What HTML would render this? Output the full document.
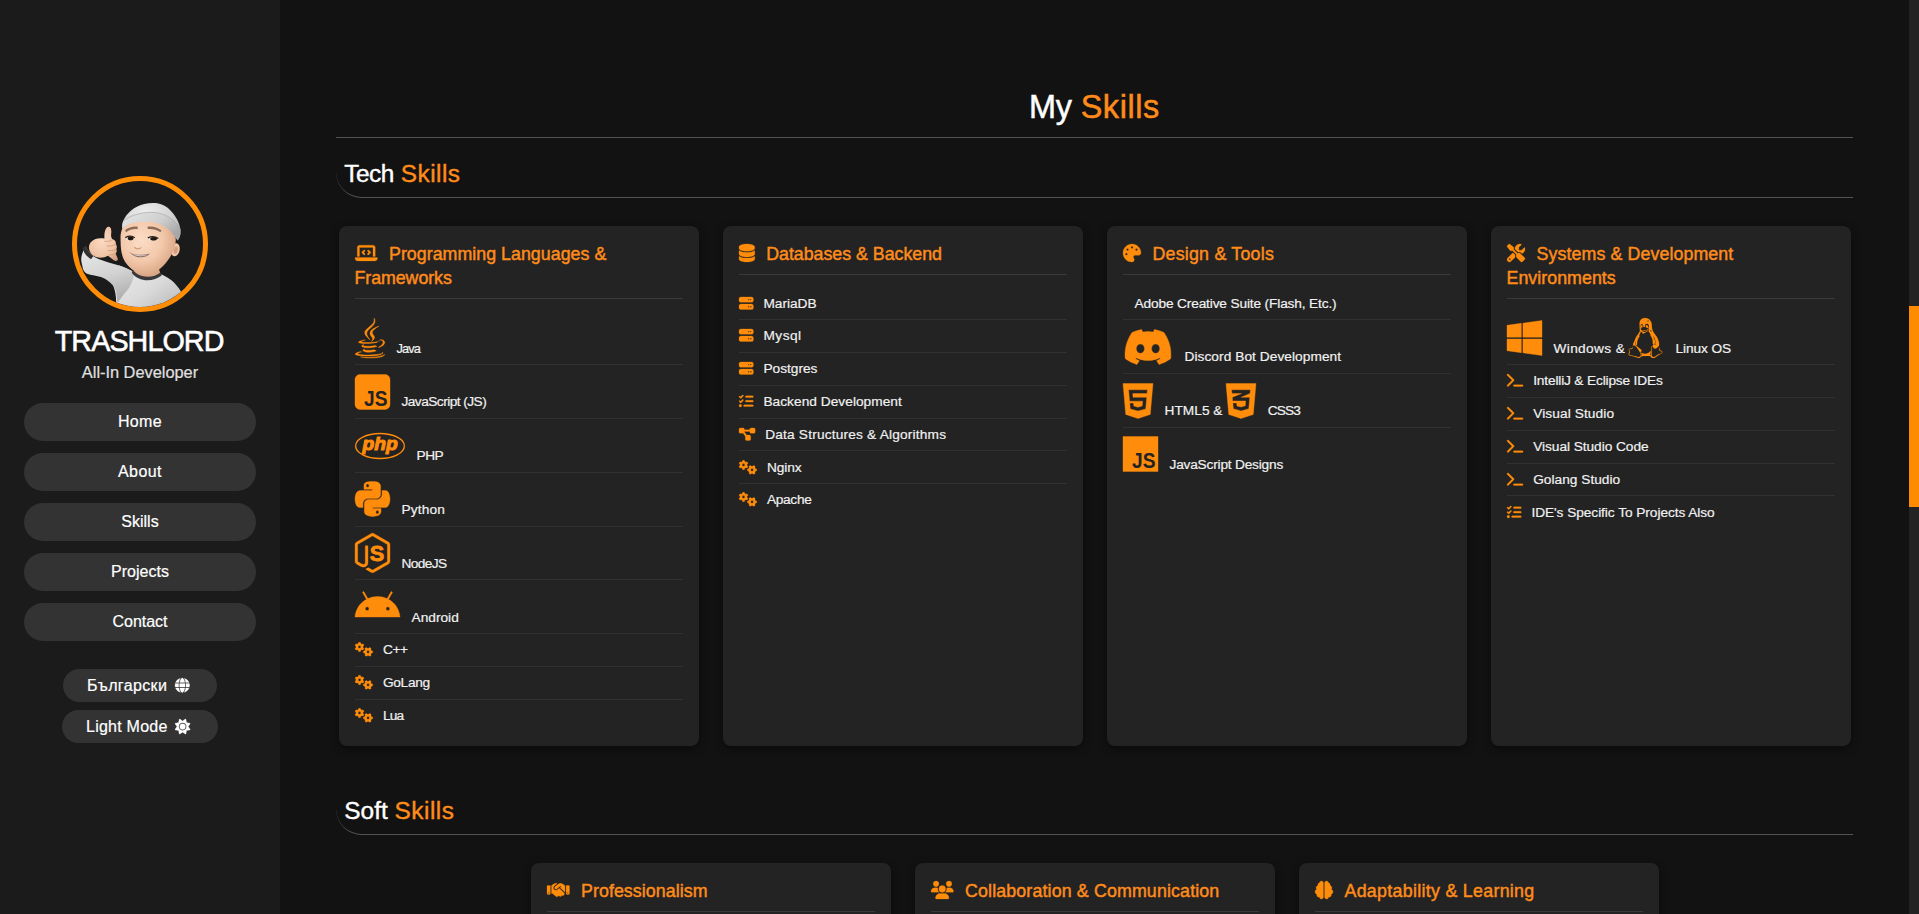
<!DOCTYPE html>
<html lang="en">
<head>
<meta charset="utf-8">
<title>TRASHLORD | All-In Developer - Skills</title>
<style>
*{box-sizing:border-box;margin:0;padding:0}
html,body{width:1919px;height:914px;overflow:hidden}
body{position:relative;background:#121212;color:#f1f1f1;font-family:"Liberation Sans",sans-serif;font-size:13.7px;line-height:16px}
.ic{display:block;flex:none;fill:currentColor;overflow:visible;stroke:currentColor;stroke-linejoin:round}
.ic.b{stroke-width:5px}
.ic.s{stroke-width:9px}
.ic.h{stroke-width:7px}
.ic.g{stroke-width:8px}
.t{white-space:nowrap}
.o{color:#ff8c1a}
/* sidebar */
.sidebar{position:absolute;left:0;top:0;width:280px;height:914px;background:#1b1b1b}
.avatar{position:absolute;left:72px;top:176px;width:136px;height:136px;border-radius:50%;border:5px solid #ff8d05;overflow:hidden}
.avatar svg{display:block;position:absolute;left:-5px;top:-5px;width:136px;height:136px}
.sidebar h1{position:absolute;left:-0.9px;width:280px;top:323.8px;text-align:center;font-size:28.7px;line-height:34px;font-weight:400;color:#fff;-webkit-text-stroke:.55px #fff}
.role{position:absolute;left:0;width:280px;top:361.5px;text-align:center;font-size:16.4px;line-height:20px;color:#e0e0e0;-webkit-text-stroke:.2px #e0e0e0}
.nb{position:absolute;left:24px;width:232px;height:38.2px;border-radius:19.1px;background:#333;color:#fff;text-align:center;font-size:16px;line-height:38.6px;-webkit-text-stroke:.2px #fff}
.tg{position:absolute;border:0;background:#333;color:#fff;font-family:inherit;font-size:16px;line-height:33px;height:33px;border-radius:16.5px;display:flex;align-items:center;justify-content:center;-webkit-text-stroke:.2px #fff}
.tg{padding-right:3.6px}
.tg .ic{margin-left:7.6px}
.tg.lang{left:63px;top:669px;width:154px}
.tg.mode{left:62px;top:710px;width:156px}
/* main */
main{position:absolute;left:280px;top:0;width:1629px;height:914px}
#skills{position:absolute;left:56px;top:0;width:1517px;height:914px}
h2{position:absolute;left:0;width:1517px;top:85.2px;text-align:center;font-size:32.4px;line-height:44px;font-weight:400;color:#fff;-webkit-text-stroke:.5px}
hr{position:absolute;left:0;top:137px;width:1517px;height:1px;border:0;background:#525252}
h3{position:absolute;left:0;width:1517px;height:50px;padding-left:8.3px;font-size:24.4px;line-height:30px;font-weight:400;color:#fff;border-bottom:1px solid #545454;border-bottom-left-radius:26px;-webkit-text-stroke:.4px}
h3.tech{top:148px;padding-top:10.7px}
h3.soft{top:785px;padding-top:10.7px}
.grid{position:absolute;display:flex;gap:24px;justify-content:center;left:0;width:1517px}
.g1{top:226px;height:520px}
.g2{top:863px;height:300px}
.card{width:360px;height:100%;flex:none;background:#232323;border-radius:8px;padding:0 16px;box-shadow:0 3px 10px rgba(0,0,0,.45)}
h4{display:flex;flex-wrap:wrap;position:relative;color:#ff8c1a;font-size:17.8px;line-height:24px;font-weight:400;padding:15.9px 0 8.5px 0;border-bottom:1px solid #3a3a3a;margin-bottom:12px;-webkit-text-stroke:.45px}
h4 .ic{margin:2px 12px 0 0;color:#ff8c0a}
h4 .t{display:block}
h4 .l2{flex-basis:100%}
ul{list-style:none}
li{display:flex;align-items:flex-end;border-bottom:1px solid #313131;padding-bottom:7.65px;color:#f1f1f1;-webkit-text-stroke:.2px #f1f1f1}
li:last-child{border-bottom-color:transparent}
li.s{height:32.8px}
li.b{height:53.8px}
li .ic{color:#ff8c0a;margin-right:10px}
li .ic.s{margin-bottom:1.65px}
li .ic.b{position:relative;top:1.55px;margin-right:11.5px}
li .ic.mid{margin-left:3.8px}
.noic{display:block;width:1.5px;margin-right:10px}
/* fake scrollbar */
.sbar{position:absolute;right:0;top:0;width:10px;height:914px;background:#232323}
.thumb{position:absolute;left:0;top:305.5px;width:10px;height:201.5px;background:#ff8c00}
li .t{position:relative;left:.5px}

</style>
</head>
<body>
<aside class="sidebar">
<div class="avatar"><svg viewBox="0 0 136 136" role="img" aria-label="TRASHLORD avatar">
<defs>
<radialGradient id="gSkin" cx="38%" cy="38%" r="75%"><stop offset="0" stop-color="#fcdcc5"/><stop offset=".5" stop-color="#f3c9ab"/><stop offset="1" stop-color="#d09a78"/></radialGradient>
<radialGradient id="gHat" cx="40%" cy="22%" r="90%"><stop offset="0" stop-color="#ededed"/><stop offset=".5" stop-color="#d3d3d3"/><stop offset="1" stop-color="#a3a3a3"/></radialGradient>
<linearGradient id="gCuff" x1="0" y1="0" x2="1" y2=".6"><stop offset="0" stop-color="#e4e4e4"/><stop offset=".6" stop-color="#d0d0d0"/><stop offset="1" stop-color="#a8a8a8"/></linearGradient>
<linearGradient id="gBody" x1="0" y1="0" x2="1" y2="1"><stop offset="0" stop-color="#eeeeee"/><stop offset=".5" stop-color="#dadada"/><stop offset="1" stop-color="#b0b0b0"/></linearGradient>
<linearGradient id="gArm" x1="0" y1="0" x2=".3" y2="1"><stop offset="0" stop-color="#ebebeb"/><stop offset=".6" stop-color="#d2d2d2"/><stop offset="1" stop-color="#b2b2b2"/></linearGradient>
<radialGradient id="gHand" cx="45%" cy="40%" r="75%"><stop offset="0" stop-color="#fcdac3"/><stop offset=".6" stop-color="#f1c5a6"/><stop offset="1" stop-color="#cf9a79"/></radialGradient>
<clipPath id="cAv"><circle cx="68" cy="68" r="63.500"/></clipPath>
</defs>
<g clip-path="url(#cAv)">
<!-- sweater body -->
<path d="M47 89.500 C53 91.500 58 94 62 96 C70 104 81 103.500 88 98 C94 100 101 104.500 105 110 C108 113 110 117 111 122 L112 140 L43 140 C45 128 44.500 117 41 109 Z" fill="url(#gBody)"/>
<!-- arm / sleeve -->
<path d="M13.800 70.500 C16 76 21 81 26.500 83 C33 85.500 40 87.500 47.300 89.600 C54 92 59 94.500 62 96.500 C62 104 58 112 52 118 L45 128 C45.500 120 44 113 40.800 109.300 C37 105 34 103 30.300 101.400 C24 99.500 18 99 14.500 97.500 C11 95 10.600 91.500 10.600 90.900 C9.500 87 9 84 9.300 81.700 C10 77 12 73 13.800 70.500 Z" fill="url(#gArm)"/>
<!-- dark wrist band -->
<path d="M13.800 69.500 C14.800 73.500 17.500 77.500 21.500 80 L19 83.200 C14.500 80.500 11.500 76.500 10.600 72 Z" fill="#34302f"/>
<!-- neck -->
<path d="M63 88 L86 90 L88.500 98 C81 104 69 103.500 61.800 95.500 Z" fill="#dba685"/>
<!-- collar -->
<path d="M60.800 93.800 C66 101.500 80 103.500 88.800 96.300 L89.600 99.600 C80.500 107 65.500 105.500 59.800 96.800 Z" fill="#38383a"/>
<!-- ear -->
<ellipse cx="103.300" cy="73.800" rx="4.300" ry="6.600" transform="rotate(12 103.300 73.800)" fill="#f0c4a5"/>
<ellipse cx="103.800" cy="74.200" rx="2" ry="3.700" transform="rotate(12 103.800 74.200)" fill="#d79f7e"/>
<!-- face -->
<path d="M50.200 52.800 C48.800 56 48.300 60 48.600 63.300 C48.500 67.500 48.700 71.500 49.300 75.100 C50 79.500 51.500 83.500 53.900 87 C56.500 90.500 59.500 93.500 63.100 95.500 C66.500 97.600 70 98.800 73.600 98.800 C78 98.600 82 97.200 85.400 94.800 C89.500 92 93 88.500 95.900 84.300 C98 81.500 99.800 78.500 101.100 75.100 C102.800 71 103.800 67 103.800 63.300 C103 52 94 44 80 43 C66 42 55 45 50.200 52.800 Z" fill="url(#gSkin)"/>
<!-- beanie dome -->
<path d="M50.200 52.800 C50 50 50.300 47.500 51 45.600 C52.500 41 55.500 37.500 59.100 34.400 C63 31 67.500 29 72.300 27.900 C76.500 27 81 26.800 85.400 27.200 C90.500 28 95 30.500 98.500 34.400 C102 38 104.800 42 106.400 46.300 C108 50 108.800 54 108.400 58.100 C108 60.500 107 62.800 105.700 64.600 C105 63.500 104.500 62.800 103.800 62 C101.500 58.500 99 55.500 95.900 52.800 C92 49.500 87.500 47.300 82.800 46.300 C78.500 45.400 74 45.200 69.600 45.600 C65 46 60.500 46.800 56.500 48.200 C54 49.500 52 51 50.200 52.800 Z" fill="url(#gHat)"/>
<!-- beanie folded cuff -->
<path d="M50.200 52.800 C52 51 54 49.500 56.500 48.200 C60.500 46.800 65 46 69.600 45.600 C74 45.200 78.500 45.400 82.800 46.300 C87.500 47.300 92 49.500 95.900 52.800 C99 55.500 101.500 58.500 103.800 62 L105.700 64.600 C107 62.800 108 60.500 108.400 58.100 C108.600 56.500 108.600 55 108.400 53.500 C106 49 103 45.500 99 42.500 C94.500 39.300 89.500 37.300 84 36.600 C78.500 36 73 36.300 67.500 37.600 C61.500 39 56 41.500 51.200 45 C50.500 47.500 50.100 50 50.200 52.800 Z" fill="url(#gCuff)"/>
<path d="M51.200 45 C56 41.500 61.500 39 67.500 37.600 C73 36.300 78.500 36 84 36.600 C89.500 37.300 94.500 39.300 99 42.500 C103 45.500 106 49 108.400 53.500" stroke="#a9a9a9" stroke-width=".8" fill="none" opacity=".8"/>
<!-- brows -->
<path d="M53 54.300 C56.500 51.300 61 50.200 65.700 50.700 L65.600 53.200 C61.500 52.700 57.500 53.700 54.200 56.300 Z" fill="#8b6b58"/>
<path d="M75.600 50.600 C80.500 49.800 85.500 51.200 89.500 54.200 L88.500 56.300 C84.500 53.600 80 52.600 75.700 53.100 Z" fill="#8b6b58"/>
<!-- eyes -->
<ellipse cx="57.600" cy="62.500" rx="4" ry="1.800" fill="#efe2d6"/>
<ellipse cx="81" cy="62.900" rx="4.700" ry="1.800" fill="#efe2d6"/>
<ellipse cx="58.600" cy="62.400" rx="2.900" ry="1.800" fill="#1d1611"/>
<ellipse cx="81.600" cy="62.800" rx="3.400" ry="1.800" fill="#1d1611"/>
<path d="M53.300 61.600 C56.300 60 60.500 60.100 62.800 61.700" stroke="#2a1e18" stroke-width="1.300" fill="none"/>
<path d="M75.800 61.900 C79 60.400 83.500 60.600 86.300 62.500" stroke="#2a1e18" stroke-width="1.300" fill="none"/>
<!-- nose -->
<ellipse cx="65.700" cy="69" rx="3.800" ry="3.500" fill="#f9d8c0"/>
<path d="M62.300 71.200 C64 73.400 67.500 73.500 69.300 71.400" stroke="#cf9b7b" stroke-width="1.100" fill="none"/>
<!-- mouth -->
<path d="M58.300 76.900 C63 79 71 79.600 77.800 77.400 C75 82.300 63.500 83.200 58.300 76.900 Z" fill="#8a6f6c"/>
<path d="M59.800 77.800 C64 79.600 71 80 76 78.500 C72 80.800 64 80.800 59.800 77.800 Z" fill="#ebe3e0"/>
<path d="M57.600 76.500 C58 76.300 58.500 76.500 58.700 77" stroke="#c58f74" stroke-width=".8" fill="none"/>
<!-- hand (shaka) -->
<path d="M32.500 62.500 C32 57.500 33 52.500 35.500 51 C38.500 50 39.800 53 39.200 57.500 C38.900 60 39.200 62 40.500 63.300 C43 64 44.200 65.800 43.800 68 C45 69.500 45.200 71.500 44.300 73 C45.200 74.500 44.800 76.500 43.600 77.500 L45.600 82 C46.600 84.800 43.800 86 41.800 84.300 L36 79.800 C31 82.800 24 82.300 20 78.800 C16.500 75.500 16 70 18.500 66.500 C21.500 62.500 27 61.500 32.500 62.500 Z" fill="url(#gHand)"/>
<path d="M40.500 63.800 C38 65.300 35 65.800 32.500 65.300 M43.800 68.300 C41 70 37.500 70.500 34.800 69.800 M44.200 73.200 C41.500 74.600 38.500 75 36 74.400 M43.400 77.700 C41.300 78.700 39 79 37 78.500" stroke="#d39f7f" stroke-width=".9" fill="none"/>
</g>
</svg>
</div>
<h1><span class="t" style="letter-spacing:-0.913px">TRASHLORD</span></h1>
<p class="role"><span class="t" style="letter-spacing:-0.020px">All-In Developer</span></p>
<nav><a class="nb" style="top:402.80px"><span class="t" style="letter-spacing:0.333px">Home</span></a><a class="nb" style="top:452.85px"><span class="t" style="letter-spacing:0.421px">About</span></a><a class="nb" style="top:502.90px"><span class="t">Skills</span></a><a class="nb" style="top:552.95px"><span class="t">Projects</span></a><a class="nb" style="top:603.00px"><span class="t">Contact</span></a></nav>
<button class="tg lang"><span class="t" style="letter-spacing:0.363px">Български</span><svg class="ic g" viewBox="0 0 512 512" style="width:14.60px;height:14.60px;" aria-hidden="true"><path d="M352 256c0 22.200-1.200 43.600-3.300 64H163.300c-2.200-20.400-3.300-41.800-3.300-64s1.200-43.600 3.300-64H348.700c2.200 20.400 3.300 41.800 3.300 64zm28.800-64H503.900c5.300 20.500 8.100 41.900 8.100 64s-2.800 43.500-8.100 64H380.800c2.100-20.600 3.200-42 3.200-64s-1.100-43.400-3.200-64zm112.600-32H376.700c-10-63.900-29.800-117.400-55.300-151.600c78.300 20.700 142 77.500 171.900 151.600zm-149.100 0H167.700c6.100-36.400 15.500-68.600 27-94.700c10.500-23.600 22.200-40.700 33.500-51.500C239.400 3.200 248.700 0 256 0s16.600 3.200 27.800 13.800c11.300 10.800 23 27.900 33.500 51.500c11.600 26 20.900 58.200 27 94.700zm-209 0H18.600C48.600 85.900 112.200 29.100 190.600 8.400C165.100 42.600 145.300 96.100 135.300 160zM8.100 192H131.200c-2.100 20.600-3.200 42-3.200 64s1.100 43.400 3.200 64H8.100C2.800 299.500 0 278.100 0 256s2.800-43.500 8.100-64zM194.700 446.600c-11.600-26-20.900-58.200-27-94.600H344.300c-6.100 36.400-15.500 68.600-27 94.600c-10.500 23.600-22.200 40.700-33.500 51.500C272.600 508.800 263.300 512 256 512s-16.600-3.200-27.800-13.800c-11.300-10.800-23-27.900-33.500-51.500zM135.300 352c10 63.900 29.800 117.400 55.300 151.600C112.200 482.900 48.600 426.100 18.600 352H135.300zm358.100 0c-30 74.100-93.600 130.900-171.900 151.600c25.500-34.200 45.200-87.700 55.300-151.600H493.400z"/></svg></button>
<button class="tg mode"><span class="t" style="letter-spacing:0.233px">Light Mode</span><svg class="ic g" viewBox="0 0 512 512" style="width:15.20px;height:15.20px;" aria-hidden="true"><path d="M361.500 1.200c5 2.100 8.600 6.600 9.600 11.900L391 121l107.900 19.800c5.300 1 9.800 4.600 11.900 9.600s1.500 10.700-1.600 15.200L446.900 256l62.300 90.300c3.100 4.500 3.700 10.200 1.600 15.200s-6.600 8.600-11.900 9.600L391 391 371.100 498.900c-1 5.300-4.600 9.800-9.600 11.900s-10.700 1.500-15.200-1.600L256 446.900l-90.300 62.300c-4.500 3.100-10.200 3.700-15.200 1.600s-8.600-6.600-9.600-11.900L121 391 13.100 371.100c-5.300-1-9.800-4.600-11.900-9.600s-1.500-10.700 1.600-15.200L65.100 256 2.800 165.700c-3.100-4.500-3.700-10.200-1.600-15.200s6.600-8.600 11.900-9.600L121 121 140.900 13.100c1-5.300 4.600-9.800 9.600-11.900s10.700-1.500 15.200 1.600L256 65.100 346.300 2.800c4.500-3.100 10.200-3.700 15.200-1.600zM160 256a96 96 0 1 1 192 0 96 96 0 1 1 -192 0zm224 0a128 128 0 1 0 -256 0 128 128 0 1 0 256 0z"/></svg></button>
</aside>
<main>
<section id="skills">
<h2><span class="t" style="letter-spacing:-0.300px">My</span> <span class="o"><span class="t" style="letter-spacing:0.620px">Skills</span></span></h2>
<hr>
<h3 class="tech"><span class="t" style="letter-spacing:-0.467px">Tech</span> <span class="o"><span class="t" style="letter-spacing:0.480px">Skills</span></span></h3>
<div class="grid g1">
<article class="card">
<h4><svg class="ic h" viewBox="0 0 640 512" style="width:22.50px;height:18.00px;" aria-hidden="true"><path d="M64 96c0-35.300 28.700-64 64-64H512c35.300 0 64 28.700 64 64V352H512V96H128V352H64V96zM0 403.200C0 392.600 8.600 384 19.200 384H620.800c10.600 0 19.200 8.600 19.200 19.200c0 42.400-34.400 76.800-76.800 76.800H76.800C34.400 480 0 445.600 0 403.200zM281 209l-31 31 31 31c9.400 9.400 9.400 24.600 0 33.900s-24.600 9.400-33.900 0l-48-48c-9.400-9.400-9.400-24.600 0-33.900l48-48c9.400-9.400 24.600-9.400 33.900 0s9.400 24.600 0 33.900zM393 175l48 48c9.400 9.400 9.400 24.600 0 33.900l-48 48c-9.400 9.400-24.600 9.400-33.900 0s-9.400-24.600 0-33.900l31-31-31-31c-9.400-9.400-9.400-24.600 0-33.900s24.600-9.400 33.900 0z"/></svg><span class="t" style="letter-spacing:0.036px">Programming Languages &amp;</span><span class="t l2" style="letter-spacing:-0.056px"> Frameworks</span></h4>
<ul><li class="b"><svg class="ic b" viewBox="0 0 384 512" style="width:30.00px;height:40.00px;" aria-hidden="true"><path d="M277.740 312.900c9.800-6.700 23.400-12.500 23.400-12.500s-38.700 7-77.200 10.200c-47.100 3.900-97.700 4.700-123.100 1.300-60.100-8 33-30.100 33-30.100s-36.100-2.400-80.600 19c-52.500 25.400 130 37 224.500 12.100zm-85.400-32.100c-19-42.700-83.100-80.200 0-145.800C296 53.200 242.840 0 242.840 0c21.500 84.500-75.600 110.100-110.700 162.600-23.900 35.900 11.700 74.400 60.200 118.200zm114.600-176.200c.1 0-175.200 43.800-91.500 140.200 24.700 28.400-6.500 54-6.500 54s62.700-32.400 33.900-72.900c-26.900-37.800-47.500-56.600 64.100-121.300zm-6.100 270.500a12.190 12.190 0 0 1-2 2.600c128.300-33.700 81.100-118.900 19.800-97.300a17.330 17.330 0 0 0-8.200 6.300 70.450 70.450 0 0 1 11-3c31-6.500 75.500 41.500-20.600 91.400zM348 437.400s14.500 11.900-15.900 21.200c-57.900 17.500-240.800 22.800-291.600.7-18.300-7.900 16-19 26.800-21.300 11.200-2.400 17.700-2 17.700-2-20.300-14.300-131.300 28.100-56.400 40.200C232.840 509.400 401 461.300 348 437.400zM124.440 396c-78.700 22 47.900 67.400 148.100 24.500a185.890 185.890 0 0 1-28.200-13.800c-44.700 8.500-65.400 9.100-106 4.500-33.500-3.800-13.900-15.200-13.900-15.200zm179.800 97.200c-78.700 14.800-175.800 13.100-233.300 3.600 0-.1 11.800 9.700 72.400 13.600 92.200 5.900 233.800-3.300 237.100-46.900 0 0-6.400 16.500-76.200 29.700zM260.640 353c-59.200 11.400-93.500 11.100-136.800 6.600-33.500-3.500-11.600-19.700-11.600-19.700-86.800 28.800 48.200 61.400 169.500 25.900a60.370 60.370 0 0 1-21.100-12.800z"/></svg><span class="t" style="font-size:12.8px;letter-spacing:-0.867px">Java</span></li>
<li class="b"><svg class="ic b" viewBox="0 0 448 512" style="width:35.00px;height:40.00px;" aria-hidden="true"><rect x="0" y="32" width="448" height="448" rx="64"/><text x="265" y="436" text-anchor="middle" font-family="Liberation Sans, sans-serif" font-weight="700" font-size="284" textLength="300" lengthAdjust="spacingAndGlyphs" fill="#232323" stroke="none">JS</text></svg><span class="t" style="letter-spacing:-0.543px">JavaScript (JS)</span></li>
<li class="b"><svg class="ic b" viewBox="0 0 640 512" style="width:50.00px;height:40.00px;" aria-hidden="true"><ellipse cx="320" cy="256" rx="311.6" ry="159.9" fill="none" stroke="currentColor" stroke-width="16.8"/><text x="322" y="306" text-anchor="middle" font-family="Liberation Sans, sans-serif" font-weight="700" font-style="italic" font-size="246" textLength="450" lengthAdjust="spacingAndGlyphs" stroke="currentColor" stroke-width="14" stroke-linejoin="round">php</text></svg><span class="t" style="letter-spacing:-0.500px">PHP</span></li>
<li class="b"><svg class="ic b" viewBox="0 0 448 512" style="width:35.00px;height:40.00px;" aria-hidden="true"><path d="M439.800 200.500c-7.700-30.900-22.300-54.200-53.400-54.200h-40.100v47.400c0 36.800-31.200 67.800-66.800 67.800H172.700c-29.200 0-53.400 25-53.400 54.300v101.800c0 29 25.200 46 53.400 54.300 33.800 9.900 66.300 11.700 106.800 0 26.900-7.800 53.400-23.500 53.400-54.300v-40.700H226.200v-13.600h160.200c31.100 0 42.600-21.700 53.400-54.200 11.200-33.500 10.700-65.700 0-108.600zM286.200 404c11.100 0 20.100 9.100 20.100 20.300 0 11.300-9 20.400-20.100 20.400-11 0-20.100-9.200-20.100-20.400.1-11.300 9.100-20.300 20.100-20.300zM167.800 248.100h106.800c29.700 0 53.400-24.500 53.400-54.300V91.900c0-29-24.400-50.700-53.400-55.600-35.800-5.900-74.700-5.600-106.800.1-45.200 8-53.400 24.700-53.400 55.600v40.700h106.900v13.600h-147c-31.100 0-58.300 18.700-66.800 54.200-9.800 40.700-10.200 66.100 0 108.600 7.600 31.600 25.700 54.200 56.800 54.200H101v-48.800c0-35.300 30.500-66.400 66.800-66.400zm-6.700-142.600c-11.100 0-20.100-9.100-20.100-20.300.1-11.300 9-20.400 20.100-20.400 11 0 20.100 9.200 20.100 20.400s-9 20.300-20.100 20.300z"/></svg><span class="t" style="letter-spacing:0.140px">Python</span></li>
<li class="b"><svg class="ic b" viewBox="0 0 448 512" style="width:35.00px;height:40.00px;" aria-hidden="true"><path d="M224 508c-6.700 0-13.500-1.800-19.400-5.200l-61.700-36.500c-9.200-5.200-4.700-7-1.700-8 12.300-4.300 14.800-5.200 27.900-12.700 1.400-.8 3.200-.5 4.600.4l47.400 28.100c1.700 1 4.100 1 5.700 0l184.700-106.600c1.700-1 2.800-3 2.800-5V149.300c0-2.100-1.100-4-2.900-5.100L226.800 37.700c-1.700-1-4-1-5.700 0L36.600 144.300c-1.800 1-2.900 3-2.900 5.100v213.100c0 2 1.100 4 2.900 4.900l50.600 29.200c27.500 13.700 44.300-2.400 44.300-18.700V167.500c0-3 2.400-5.300 5.400-5.300h23.400c2.900 0 5.400 2.300 5.400 5.300V378c0 36.600-20 57.600-54.700 57.600-10.700 0-19.100 0-42.500-11.600l-48.400-27.900C8.100 389.200.7 376.300.7 362.400V149.300c0-13.800 7.400-26.800 19.400-33.700L204.600 9c11.700-6.600 27.200-6.600 38.800 0l184.700 106.700c12 6.900 19.400 19.800 19.400 33.700v213.100c0 13.800-7.400 26.700-19.400 33.700L243.400 502.800c-5.900 3.400-12.600 5.200-19.400 5.200z"/><text x="282" y="361" text-anchor="middle" font-family="Liberation Sans, sans-serif" font-weight="700" font-size="282" textLength="186" lengthAdjust="spacingAndGlyphs" stroke="currentColor" stroke-width="10">S</text></svg><span class="t" style="letter-spacing:-0.638px">NodeJS</span></li>
<li class="b"><svg class="ic b" viewBox="0 0 576 512" style="width:45.00px;height:40.00px;" aria-hidden="true"><path d="M420.550 301.930a24 24 0 1 1 24-24 24 24 0 0 1-24 24m-265.100 0a24 24 0 1 1 24-24 24 24 0 0 1-24 24m273.700-144.480 47.940-83a10 10 0 1 0-17.270-10l-48.540 84.070a301.250 301.250 0 0 0-246.560 0l-48.540-84.070a10 10 0 1 0-17.270 10l47.940 83C64.530 202.220 8.240 285.550 0 384h576c-8.240-98.450-64.540-181.780-146.850-226.550"/></svg><span class="t" style="letter-spacing:0.017px">Android</span></li>
<li class="s"><svg class="ic s" viewBox="0 0 640 512" style="width:18.00px;height:14.40px;" aria-hidden="true"><path d="M308.500 135.300c7.100-6.300 9.900-16.200 6.200-25c-2.300-5.300-4.800-10.500-7.600-15.500L304 89.400c-3-5-6.300-9.900-9.800-14.600c-5.700-7.600-15.700-10.100-24.700-7.100l-28.200 9.300c-10.700-8.800-23-16-36.200-20.900L199 27.100c-1.900-9.300-9.100-16.700-18.500-17.800C173.900 8.400 167.200 8 160.400 8h-.7c-6.800 0-13.500 .4-20.100 1.200c-9.400 1.100-16.600 8.600-18.500 17.800L115 56.100c-13.300 5-25.500 12.100-36.200 20.900L50.500 67.800c-9-3-19-.5-24.700 7.100c-3.500 4.700-6.800 9.600-9.900 14.600l-3 5.300c-2.800 5-5.300 10.200-7.600 15.600c-3.700 8.700-.9 18.600 6.200 25l22.200 19.800C32.600 161.900 32 168.900 32 176s.6 14.100 1.700 20.900L11.500 216.700c-7.100 6.300-9.900 16.200-6.200 25c2.300 5.300 4.800 10.500 7.600 15.600l3 5.200c3 5.100 6.300 9.900 9.900 14.600c5.700 7.600 15.700 10.100 24.700 7.100l28.200-9.300c10.700 8.800 23 16 36.200 20.900l6.100 29.100c1.900 9.300 9.100 16.700 18.500 17.800c6.700 .8 13.500 1.200 20.400 1.200s13.700-.4 20.400-1.200c9.400-1.100 16.600-8.600 18.500-17.800l6.100-29.100c13.300-5 25.500-12.100 36.200-20.900l28.200 9.300c9 3 19 .5 24.700-7.100c3.500-4.700 6.800-9.500 9.800-14.600l3.100-5.400c2.800-5 5.300-10.200 7.600-15.500c3.700-8.700 .9-18.600-6.200-25l-22.200-19.800c1.100-6.800 1.700-13.800 1.700-20.900s-.6-14.100-1.700-20.900l22.200-19.800zM112 176a48 48 0 1 1 96 0 48 48 0 1 1 -96 0zM504.700 500.500c6.300 7.100 16.200 9.900 25 6.200c5.300-2.300 10.500-4.800 15.500-7.600l5.400-3.100c5-3 9.900-6.300 14.600-9.800c7.600-5.700 10.100-15.700 7.100-24.700l-9.300-28.200c8.800-10.700 16-23 20.900-36.200l29.100-6.100c9.300-1.900 16.700-9.100 17.800-18.500c.8-6.700 1.200-13.500 1.200-20.400s-.4-13.700-1.200-20.400c-1.100-9.400-8.600-16.600-17.800-18.500L583.900 307c-5-13.300-12.100-25.500-20.900-36.200l9.300-28.200c3-9 .5-19-7.100-24.700c-4.700-3.500-9.600-6.800-14.600-9.900l-5.300-3c-5-2.800-10.200-5.300-15.600-7.600c-8.700-3.700-18.600-.9-25 6.200l-19.800 22.200c-6.800-1.100-13.800-1.700-20.900-1.700s-14.100 .6-20.900 1.700l-19.800-22.200c-6.300-7.100-16.200-9.900-25-6.200c-5.300 2.300-10.500 4.800-15.600 7.600l-5.200 3c-5.100 3-9.900 6.300-14.600 9.900c-7.600 5.700-10.100 15.700-7.100 24.700l9.300 28.200c-8.800 10.700-16 23-20.900 36.200L315.100 313c-9.300 1.900-16.700 9.100-17.800 18.500c-.8 6.700-1.200 13.500-1.200 20.400s.4 13.700 1.200 20.400c1.100 9.400 8.600 16.600 17.800 18.500l29.100 6.100c5 13.300 12.100 25.500 20.900 36.200l-9.300 28.200c-3 9-.5 19 7.100 24.700c4.700 3.500 9.500 6.800 14.600 9.800l5.400 3.100c5 2.800 10.200 5.300 15.500 7.600c8.700 3.700 18.600 .9 25-6.200l19.800-22.200c6.800 1.100 13.800 1.700 20.900 1.700s14.100-.6 20.900-1.700l19.800 22.200zM464 304a48 48 0 1 1 0 96 48 48 0 1 1 0-96z"/></svg><span class="t" style="letter-spacing:-0.400px">C++</span></li>
<li class="s"><svg class="ic s" viewBox="0 0 640 512" style="width:18.00px;height:14.40px;" aria-hidden="true"><path d="M308.500 135.300c7.100-6.300 9.900-16.200 6.200-25c-2.300-5.300-4.800-10.500-7.600-15.500L304 89.400c-3-5-6.300-9.900-9.800-14.600c-5.700-7.600-15.700-10.100-24.700-7.100l-28.200 9.300c-10.700-8.800-23-16-36.200-20.900L199 27.100c-1.900-9.300-9.100-16.700-18.500-17.800C173.900 8.400 167.200 8 160.400 8h-.7c-6.800 0-13.500 .4-20.100 1.200c-9.400 1.100-16.600 8.600-18.500 17.800L115 56.100c-13.300 5-25.500 12.100-36.200 20.900L50.500 67.800c-9-3-19-.5-24.700 7.100c-3.500 4.700-6.800 9.600-9.900 14.600l-3 5.300c-2.800 5-5.300 10.200-7.600 15.600c-3.700 8.700-.9 18.600 6.200 25l22.200 19.800C32.600 161.900 32 168.900 32 176s.6 14.100 1.700 20.900L11.500 216.700c-7.100 6.300-9.900 16.200-6.200 25c2.300 5.300 4.800 10.500 7.600 15.600l3 5.200c3 5.100 6.300 9.900 9.900 14.600c5.700 7.600 15.700 10.100 24.700 7.100l28.200-9.300c10.700 8.800 23 16 36.200 20.900l6.100 29.100c1.900 9.300 9.100 16.700 18.500 17.800c6.700 .8 13.500 1.200 20.400 1.200s13.700-.4 20.400-1.200c9.400-1.100 16.600-8.600 18.500-17.800l6.100-29.100c13.300-5 25.500-12.100 36.200-20.900l28.200 9.300c9 3 19 .5 24.700-7.100c3.500-4.700 6.800-9.500 9.800-14.600l3.100-5.400c2.800-5 5.300-10.200 7.600-15.500c3.700-8.700 .9-18.600-6.200-25l-22.200-19.800c1.100-6.800 1.700-13.800 1.700-20.900s-.6-14.100-1.700-20.900l22.200-19.800zM112 176a48 48 0 1 1 96 0 48 48 0 1 1 -96 0zM504.700 500.500c6.300 7.100 16.200 9.900 25 6.200c5.300-2.300 10.500-4.800 15.500-7.600l5.400-3.100c5-3 9.900-6.300 14.600-9.800c7.600-5.700 10.100-15.700 7.100-24.700l-9.300-28.200c8.800-10.700 16-23 20.900-36.200l29.100-6.100c9.300-1.900 16.700-9.100 17.800-18.500c.8-6.700 1.200-13.500 1.200-20.400s-.4-13.700-1.200-20.400c-1.100-9.400-8.600-16.600-17.800-18.500L583.900 307c-5-13.300-12.100-25.500-20.900-36.200l9.300-28.200c3-9 .5-19-7.100-24.700c-4.700-3.500-9.600-6.800-14.600-9.900l-5.300-3c-5-2.800-10.200-5.300-15.600-7.600c-8.700-3.700-18.600-.9-25 6.200l-19.800 22.200c-6.800-1.100-13.800-1.700-20.900-1.700s-14.100 .6-20.900 1.700l-19.800-22.200c-6.300-7.100-16.200-9.900-25-6.200c-5.300 2.300-10.500 4.800-15.600 7.600l-5.200 3c-5.100 3-9.900 6.300-14.600 9.900c-7.600 5.700-10.100 15.700-7.100 24.700l9.300 28.200c-8.800 10.700-16 23-20.900 36.200L315.100 313c-9.300 1.900-16.700 9.100-17.800 18.500c-.8 6.700-1.200 13.500-1.200 20.400s.4 13.700 1.200 20.400c1.100 9.400 8.600 16.600 17.800 18.500l29.100 6.100c5 13.300 12.100 25.500 20.900 36.200l-9.300 28.200c-3 9-.5 19 7.100 24.700c4.700 3.500 9.500 6.800 14.600 9.800l5.400 3.100c5 2.800 10.200 5.300 15.500 7.600c8.700 3.700 18.600 .9 25-6.200l19.800-22.200c6.800 1.100 13.800 1.700 20.900 1.700s14.100-.6 20.900-1.700l19.800 22.200zM464 304a48 48 0 1 1 0 96 48 48 0 1 1 0-96z"/></svg><span class="t" style="letter-spacing:-0.320px">GoLang</span></li>
<li class="s"><svg class="ic s" viewBox="0 0 640 512" style="width:18.00px;height:14.40px;" aria-hidden="true"><path d="M308.500 135.300c7.100-6.300 9.900-16.200 6.200-25c-2.300-5.300-4.800-10.500-7.600-15.500L304 89.400c-3-5-6.300-9.900-9.800-14.600c-5.700-7.600-15.700-10.100-24.700-7.100l-28.200 9.300c-10.700-8.800-23-16-36.200-20.900L199 27.100c-1.900-9.300-9.100-16.700-18.500-17.800C173.900 8.400 167.200 8 160.400 8h-.7c-6.800 0-13.500 .4-20.100 1.200c-9.400 1.100-16.600 8.600-18.500 17.800L115 56.100c-13.300 5-25.500 12.100-36.200 20.900L50.500 67.800c-9-3-19-.5-24.700 7.100c-3.500 4.700-6.800 9.600-9.900 14.600l-3 5.300c-2.800 5-5.300 10.200-7.600 15.600c-3.700 8.700-.9 18.600 6.200 25l22.200 19.800C32.600 161.900 32 168.900 32 176s.6 14.100 1.700 20.900L11.500 216.700c-7.100 6.300-9.900 16.200-6.200 25c2.300 5.300 4.800 10.500 7.600 15.600l3 5.200c3 5.100 6.300 9.900 9.900 14.600c5.700 7.600 15.700 10.100 24.700 7.100l28.200-9.300c10.700 8.800 23 16 36.200 20.900l6.100 29.100c1.900 9.300 9.100 16.700 18.500 17.800c6.700 .8 13.500 1.200 20.400 1.200s13.700-.4 20.400-1.200c9.400-1.100 16.600-8.600 18.500-17.800l6.100-29.100c13.300-5 25.500-12.100 36.200-20.900l28.200 9.300c9 3 19 .5 24.700-7.100c3.500-4.700 6.800-9.500 9.800-14.600l3.100-5.400c2.800-5 5.300-10.200 7.600-15.500c3.700-8.700 .9-18.600-6.200-25l-22.200-19.800c1.100-6.800 1.700-13.800 1.700-20.900s-.6-14.100-1.700-20.900l22.200-19.800zM112 176a48 48 0 1 1 96 0 48 48 0 1 1 -96 0zM504.700 500.500c6.300 7.100 16.200 9.900 25 6.200c5.300-2.300 10.500-4.800 15.500-7.600l5.400-3.100c5-3 9.900-6.300 14.600-9.800c7.600-5.700 10.100-15.700 7.100-24.700l-9.300-28.200c8.800-10.700 16-23 20.900-36.200l29.100-6.100c9.300-1.900 16.700-9.100 17.800-18.500c.8-6.700 1.200-13.500 1.200-20.400s-.4-13.700-1.200-20.400c-1.100-9.400-8.600-16.600-17.800-18.500L583.900 307c-5-13.300-12.100-25.500-20.900-36.200l9.300-28.200c3-9 .5-19-7.100-24.700c-4.700-3.500-9.600-6.800-14.600-9.900l-5.300-3c-5-2.800-10.200-5.300-15.600-7.600c-8.700-3.700-18.600-.9-25 6.200l-19.800 22.200c-6.800-1.100-13.800-1.700-20.900-1.700s-14.100 .6-20.900 1.700l-19.800-22.200c-6.300-7.100-16.200-9.900-25-6.200c-5.300 2.300-10.500 4.800-15.600 7.600l-5.200 3c-5.100 3-9.900 6.300-14.600 9.900c-7.600 5.700-10.100 15.700-7.100 24.700l9.300 28.200c-8.800 10.700-16 23-20.900 36.200L315.100 313c-9.300 1.900-16.700 9.100-17.800 18.500c-.8 6.700-1.200 13.500-1.200 20.400s.4 13.700 1.200 20.400c1.100 9.400 8.600 16.600 17.800 18.500l29.100 6.100c5 13.300 12.100 25.500 20.900 36.200l-9.300 28.200c-3 9-.5 19 7.100 24.700c4.700 3.500 9.500 6.800 14.600 9.800l5.400 3.100c5 2.800 10.200 5.300 15.500 7.600c8.700 3.700 18.600 .9 25-6.200l19.800-22.200c6.800 1.100 13.800 1.700 20.900 1.700s14.100-.6 20.900-1.700l19.800 22.200zM464 304a48 48 0 1 1 0 96 48 48 0 1 1 0-96z"/></svg><span class="t" style="letter-spacing:-0.905px">Lua</span></li></ul>
</article>
<article class="card">
<h4><svg class="ic h" viewBox="0 0 448 512" style="width:15.75px;height:18.00px;" aria-hidden="true"><path d="M448 80v48c0 44.200-100.300 80-224 80S0 172.200 0 128V80C0 35.800 100.300 0 224 0S448 35.800 448 80zM393.200 214.700c20.800-7.400 39.900-16.900 54.800-28.600V288c0 44.200-100.300 80-224 80S0 332.200 0 288V186.100c14.900 11.800 34 21.200 54.800 28.600C99.700 230.700 159.500 240 224 240s124.300-9.300 169.200-25.300zM0 346.100c14.900 11.800 34 21.200 54.800 28.600C99.700 390.700 159.500 400 224 400s124.300-9.300 169.200-25.300c20.800-7.400 39.900-16.900 54.800-28.600V432c0 44.200-100.300 80-224 80S0 476.200 0 432V346.100z"/></svg><span class="t" style="letter-spacing:-0.017px">Databases &amp; Backend</span></h4>
<ul><li class="s"><svg class="ic s" viewBox="0 0 512 512" style="width:14.40px;height:14.40px;" aria-hidden="true"><path d="M64 32C28.700 32 0 60.700 0 96v64c0 35.300 28.700 64 64 64H448c35.300 0 64-28.700 64-64V96c0-35.300-28.700-64-64-64H64zm280 72a24 24 0 1 1 0 48 24 24 0 1 1 0-48zm48 24a24 24 0 1 1 48 0 24 24 0 1 1 -48 0zM64 288c-35.300 0-64 28.700-64 64v64c0 35.300 28.700 64 64 64H448c35.300 0 64-28.700 64-64V352c0-35.300-28.700-64-64-64H64zm280 72a24 24 0 1 1 0 48 24 24 0 1 1 0-48zm56 24a24 24 0 1 1 48 0 24 24 0 1 1 -48 0z"/></svg><span class="t">MariaDB</span></li>
<li class="s"><svg class="ic s" viewBox="0 0 512 512" style="width:14.40px;height:14.40px;" aria-hidden="true"><path d="M64 32C28.700 32 0 60.700 0 96v64c0 35.300 28.700 64 64 64H448c35.300 0 64-28.700 64-64V96c0-35.300-28.700-64-64-64H64zm280 72a24 24 0 1 1 0 48 24 24 0 1 1 0-48zm48 24a24 24 0 1 1 48 0 24 24 0 1 1 -48 0zM64 288c-35.300 0-64 28.700-64 64v64c0 35.300 28.700 64 64 64H448c35.300 0 64-28.700 64-64V352c0-35.300-28.700-64-64-64H64zm280 72a24 24 0 1 1 0 48 24 24 0 1 1 0-48zm56 24a24 24 0 1 1 48 0 24 24 0 1 1 -48 0z"/></svg><span class="t" style="letter-spacing:0.500px">Mysql</span></li>
<li class="s"><svg class="ic s" viewBox="0 0 512 512" style="width:14.40px;height:14.40px;" aria-hidden="true"><path d="M64 32C28.700 32 0 60.700 0 96v64c0 35.300 28.700 64 64 64H448c35.300 0 64-28.700 64-64V96c0-35.300-28.700-64-64-64H64zm280 72a24 24 0 1 1 0 48 24 24 0 1 1 0-48zm48 24a24 24 0 1 1 48 0 24 24 0 1 1 -48 0zM64 288c-35.300 0-64 28.700-64 64v64c0 35.300 28.700 64 64 64H448c35.300 0 64-28.700 64-64V352c0-35.300-28.700-64-64-64H64zm280 72a24 24 0 1 1 0 48 24 24 0 1 1 0-48zm56 24a24 24 0 1 1 48 0 24 24 0 1 1 -48 0z"/></svg><span class="t" style="letter-spacing:0.003px">Postgres</span></li>
<li class="s"><svg class="ic s" viewBox="0 0 512 512" style="width:14.40px;height:14.40px;" aria-hidden="true"><path d="M152.100 38.200c9.900 8.900 10.700 24 1.800 33.900l-72 80c-4.400 4.900-10.600 7.800-17.200 7.900s-12.900-2.400-17.600-7L7 113C-2.300 103.600-2.300 88.400 7 79s24.600-9.400 33.900 0l22.100 22.100 55.100-61.200c8.900-9.900 24-10.700 33.900-1.800zm0 160c9.900 8.900 10.700 24 1.800 33.900l-72 80c-4.400 4.900-10.600 7.800-17.200 7.900s-12.900-2.400-17.600-7L7 273c-9.400-9.400-9.400-24.600 0-33.900s24.600-9.400 33.900 0l22.100 22.100 55.100-61.200c8.900-9.900 24-10.700 33.900-1.800zM224 96c0-17.700 14.300-32 32-32H480c17.700 0 32 14.300 32 32s-14.300 32-32 32H256c-17.700 0-32-14.300-32-32zm0 160c0-17.700 14.300-32 32-32H480c17.700 0 32 14.300 32 32s-14.300 32-32 32H256c-17.700 0-32-14.300-32-32zM160 416c0-17.700 14.300-32 32-32H480c17.700 0 32 14.300 32 32s-14.300 32-32 32H192c-17.700 0-32-14.300-32-32zM48 368a48 48 0 1 1 0 96 48 48 0 1 1 0-96z"/></svg><span class="t" style="letter-spacing:0.039px">Backend Development</span></li>
<li class="s"><svg class="ic s" viewBox="0 0 576 512" style="width:16.20px;height:14.40px;" aria-hidden="true"><path d="M0 80C0 53.500 21.500 32 48 32h96c26.500 0 48 21.500 48 48V96H384V80c0-26.500 21.500-48 48-48h96c26.500 0 48 21.500 48 48v96c0 26.500-21.500 48-48 48H432c-26.500 0-48-21.500-48-48V160H192v16c0 1.700-.1 3.400-.3 5L272 288h96c26.500 0 48 21.500 48 48v96c0 26.500-21.500 48-48 48H272c-26.500 0-48-21.500-48-48V336c0-1.700 .1-3.400 .3-5L144 224H48c-26.500 0-48-21.500-48-48V80z"/></svg><span class="t" style="letter-spacing:0.189px">Data Structures &amp; Algorithms</span></li>
<li class="s"><svg class="ic s" viewBox="0 0 640 512" style="width:18.00px;height:14.40px;" aria-hidden="true"><path d="M308.500 135.300c7.100-6.300 9.900-16.200 6.200-25c-2.300-5.300-4.800-10.500-7.600-15.500L304 89.400c-3-5-6.300-9.900-9.800-14.600c-5.700-7.600-15.700-10.100-24.700-7.100l-28.200 9.300c-10.700-8.800-23-16-36.200-20.900L199 27.100c-1.900-9.300-9.100-16.700-18.500-17.800C173.900 8.400 167.200 8 160.400 8h-.7c-6.800 0-13.500 .4-20.100 1.200c-9.400 1.100-16.600 8.600-18.500 17.800L115 56.100c-13.300 5-25.500 12.100-36.200 20.900L50.500 67.800c-9-3-19-.5-24.700 7.100c-3.500 4.700-6.800 9.600-9.900 14.600l-3 5.300c-2.800 5-5.300 10.200-7.600 15.600c-3.700 8.700-.9 18.600 6.200 25l22.200 19.800C32.600 161.900 32 168.900 32 176s.6 14.100 1.700 20.900L11.500 216.700c-7.100 6.300-9.900 16.200-6.200 25c2.300 5.300 4.800 10.500 7.600 15.600l3 5.200c3 5.100 6.300 9.900 9.900 14.600c5.700 7.600 15.700 10.100 24.700 7.100l28.200-9.300c10.700 8.800 23 16 36.200 20.900l6.100 29.100c1.900 9.300 9.100 16.700 18.500 17.800c6.700 .8 13.500 1.200 20.400 1.200s13.700-.4 20.400-1.200c9.400-1.100 16.600-8.600 18.500-17.800l6.100-29.100c13.300-5 25.500-12.100 36.200-20.900l28.200 9.300c9 3 19 .5 24.700-7.100c3.500-4.700 6.800-9.500 9.800-14.600l3.100-5.400c2.800-5 5.300-10.200 7.600-15.500c3.700-8.700 .9-18.600-6.200-25l-22.200-19.800c1.100-6.800 1.700-13.800 1.700-20.900s-.6-14.100-1.700-20.900l22.200-19.800zM112 176a48 48 0 1 1 96 0 48 48 0 1 1 -96 0zM504.700 500.500c6.300 7.100 16.200 9.900 25 6.200c5.300-2.300 10.500-4.800 15.500-7.600l5.400-3.100c5-3 9.900-6.300 14.600-9.800c7.600-5.700 10.100-15.700 7.100-24.700l-9.300-28.200c8.800-10.700 16-23 20.900-36.200l29.100-6.100c9.300-1.900 16.700-9.100 17.800-18.500c.8-6.700 1.200-13.500 1.200-20.400s-.4-13.700-1.200-20.400c-1.100-9.400-8.600-16.600-17.800-18.500L583.900 307c-5-13.300-12.100-25.500-20.900-36.200l9.300-28.200c3-9 .5-19-7.100-24.700c-4.700-3.500-9.600-6.800-14.600-9.900l-5.300-3c-5-2.800-10.200-5.300-15.600-7.600c-8.700-3.700-18.600-.9-25 6.200l-19.800 22.200c-6.800-1.100-13.800-1.700-20.900-1.700s-14.100 .6-20.900 1.700l-19.800-22.200c-6.300-7.100-16.200-9.900-25-6.200c-5.300 2.300-10.500 4.800-15.600 7.600l-5.200 3c-5.100 3-9.900 6.300-14.600 9.900c-7.600 5.700-10.100 15.700-7.100 24.700l9.300 28.200c-8.800 10.700-16 23-20.900 36.200L315.100 313c-9.300 1.900-16.700 9.100-17.800 18.500c-.8 6.700-1.200 13.500-1.200 20.400s.4 13.700 1.200 20.400c1.100 9.400 8.600 16.600 17.800 18.500l29.100 6.100c5 13.300 12.100 25.500 20.900 36.200l-9.300 28.200c-3 9-.5 19 7.100 24.700c4.700 3.500 9.500 6.800 14.600 9.800l5.400 3.100c5 2.800 10.200 5.300 15.500 7.600c8.700 3.700 18.600 .9 25-6.200l19.800-22.200c6.800 1.100 13.800 1.700 20.900 1.700s14.100-.6 20.900-1.700l19.800 22.200zM464 304a48 48 0 1 1 0 96 48 48 0 1 1 0-96z"/></svg><span class="t" style="letter-spacing:-0.100px">Nginx</span></li>
<li class="s"><svg class="ic s" viewBox="0 0 640 512" style="width:18.00px;height:14.40px;" aria-hidden="true"><path d="M308.500 135.300c7.100-6.300 9.900-16.200 6.200-25c-2.300-5.300-4.800-10.500-7.600-15.500L304 89.400c-3-5-6.300-9.900-9.800-14.600c-5.700-7.600-15.700-10.100-24.700-7.100l-28.200 9.300c-10.700-8.800-23-16-36.200-20.900L199 27.100c-1.900-9.300-9.100-16.700-18.500-17.800C173.900 8.400 167.200 8 160.400 8h-.7c-6.800 0-13.500 .4-20.100 1.200c-9.400 1.100-16.600 8.600-18.500 17.800L115 56.100c-13.300 5-25.500 12.100-36.200 20.900L50.500 67.800c-9-3-19-.5-24.700 7.100c-3.500 4.700-6.800 9.600-9.900 14.600l-3 5.300c-2.800 5-5.300 10.200-7.600 15.600c-3.700 8.700-.9 18.600 6.200 25l22.200 19.800C32.600 161.900 32 168.900 32 176s.6 14.100 1.700 20.900L11.500 216.700c-7.100 6.300-9.900 16.200-6.200 25c2.300 5.300 4.800 10.500 7.600 15.600l3 5.200c3 5.100 6.300 9.900 9.900 14.600c5.700 7.600 15.700 10.100 24.700 7.100l28.200-9.300c10.700 8.800 23 16 36.200 20.900l6.100 29.100c1.900 9.300 9.100 16.700 18.500 17.800c6.700 .8 13.500 1.200 20.400 1.200s13.700-.4 20.400-1.200c9.400-1.100 16.600-8.600 18.500-17.800l6.100-29.100c13.300-5 25.500-12.100 36.200-20.900l28.200 9.300c9 3 19 .5 24.700-7.100c3.500-4.700 6.800-9.500 9.800-14.600l3.100-5.400c2.800-5 5.300-10.200 7.600-15.500c3.700-8.700 .9-18.600-6.200-25l-22.200-19.800c1.100-6.800 1.700-13.800 1.700-20.900s-.6-14.100-1.700-20.900l22.200-19.800zM112 176a48 48 0 1 1 96 0 48 48 0 1 1 -96 0zM504.700 500.500c6.300 7.100 16.200 9.900 25 6.200c5.300-2.300 10.500-4.800 15.500-7.600l5.400-3.100c5-3 9.900-6.300 14.600-9.800c7.600-5.700 10.100-15.700 7.100-24.700l-9.300-28.200c8.800-10.700 16-23 20.900-36.200l29.100-6.100c9.300-1.900 16.700-9.100 17.800-18.500c.8-6.700 1.200-13.500 1.200-20.400s-.4-13.700-1.200-20.400c-1.100-9.400-8.600-16.600-17.800-18.500L583.900 307c-5-13.300-12.100-25.500-20.900-36.200l9.300-28.200c3-9 .5-19-7.100-24.700c-4.700-3.500-9.600-6.800-14.600-9.900l-5.300-3c-5-2.800-10.200-5.300-15.600-7.600c-8.700-3.700-18.600-.9-25 6.200l-19.800 22.200c-6.800-1.100-13.800-1.700-20.900-1.700s-14.100 .6-20.900 1.700l-19.800-22.200c-6.300-7.100-16.200-9.900-25-6.200c-5.300 2.300-10.500 4.800-15.600 7.600l-5.200 3c-5.100 3-9.900 6.300-14.600 9.900c-7.600 5.700-10.100 15.700-7.100 24.700l9.300 28.200c-8.800 10.700-16 23-20.900 36.200L315.100 313c-9.300 1.900-16.700 9.100-17.800 18.500c-.8 6.700-1.200 13.500-1.200 20.400s.4 13.700 1.200 20.400c1.100 9.400 8.600 16.600 17.800 18.500l29.100 6.100c5 13.300 12.100 25.500 20.900 36.200l-9.300 28.200c-3 9-.5 19 7.100 24.700c4.700 3.500 9.500 6.800 14.600 9.800l5.400 3.100c5 2.800 10.200 5.300 15.500 7.600c8.700 3.700 18.600 .9 25-6.200l19.800-22.200c6.800 1.100 13.800 1.700 20.900 1.700s14.100-.6 20.900-1.700l19.800 22.200zM464 304a48 48 0 1 1 0 96 48 48 0 1 1 0-96z"/></svg><span class="t" style="letter-spacing:-0.328px">Apache</span></li></ul>
</article>
<article class="card">
<h4><svg class="ic h" viewBox="0 0 512 512" style="width:18.00px;height:18.00px;" aria-hidden="true"><path d="M512 256c0 .9 0 1.800 0 2.700c-.4 36.500-33.600 61.300-70.100 61.300H344c-26.500 0-48 21.500-48 48c0 3.400 .4 6.700 1 9.900c2.100 10.200 6.500 20 10.800 29.900c6.100 13.800 12.100 27.500 12.100 42c0 31.800-21.600 60.700-53.400 62c-3.500 .1-7 .2-10.600 .2C114.600 512 0 397.400 0 256S114.600 0 256 0S512 114.600 512 256zM128 288a32 32 0 1 0 -64 0 32 32 0 1 0 64 0zm0-96a32 32 0 1 0 0-64 32 32 0 1 0 0 64zM288 96a32 32 0 1 0 -64 0 32 32 0 1 0 64 0zm96 96a32 32 0 1 0 0-64 32 32 0 1 0 0 64z"/></svg><span class="t" style="letter-spacing:0.231px">Design &amp; Tools</span></h4>
<ul><li class="s"><i class="noic"></i><span class="t" style="letter-spacing:-0.145px">Adobe Creative Suite (Flash, Etc.)</span></li>
<li class="b"><svg class="ic b" viewBox="0 0 640 512" style="width:50.00px;height:40.00px;" aria-hidden="true"><path d="M524.531 69.836a1.500 1.500 0 0 0-.764-.7A485.065 485.065 0 0 0 404.081 32.030a1.816 1.816 0 0 0-1.923.910 337.461 337.461 0 0 0-14.900 30.600 447.848 447.848 0 0 0-134.426 0 309.541 309.541 0 0 0-15.135-30.600 1.890 1.890 0 0 0-1.924-.910A483.689 483.689 0 0 0 116.085 69.137a1.712 1.712 0 0 0-.788.676C39.068 183.651 18.186 294.690 28.430 404.354a2.016 2.016 0 0 0 .765 1.375A487.666 487.666 0 0 0 176.020 479.918a1.900 1.900 0 0 0 2.063-.676A348.200 348.200 0 0 0 208.120 430.400a1.860 1.860 0 0 0-1.019-2.588 321.173 321.173 0 0 1-45.868-21.853 1.885 1.885 0 0 1-.185-3.126c3.082-2.309 6.166-4.711 9.109-7.137a1.819 1.819 0 0 1 1.900-.256c96.229 43.917 200.410 43.917 295.500 0a1.812 1.812 0 0 1 1.924.233c2.944 2.426 6.027 4.851 9.132 7.160a1.884 1.884 0 0 1-.162 3.126 301.407 301.407 0 0 1-45.890 21.830 1.875 1.875 0 0 0-1 2.611 391.055 391.055 0 0 0 30.014 48.815 1.864 1.864 0 0 0 2.063.7A486.048 486.048 0 0 0 610.700 405.729a1.882 1.882 0 0 0 .765-1.352C623.729 277.594 590.933 167.465 524.531 69.836ZM222.491 337.580c-28.972 0-52.844-26.587-52.844-59.239S193.056 219.100 222.491 219.100c29.665 0 53.306 26.820 52.843 59.239C275.334 310.993 251.924 337.580 222.491 337.580Zm195.380 0c-28.971 0-52.843-26.587-52.843-59.239S388.437 219.100 417.871 219.100c29.667 0 53.307 26.820 52.844 59.239C470.715 310.993 447.538 337.580 417.871 337.580Z"/></svg><span class="t" style="letter-spacing:0.061px">Discord Bot Development</span></li>
<li class="b"><svg class="ic b" viewBox="0 0 384 512" style="width:30.00px;height:40.00px;" aria-hidden="true"><path d="M0 32l34.900 395.800L191.500 480l157.600-52.200L384 32H0zm308.200 127.900H124.400l4.100 49.400h175.600l-13.600 148.400-97.900 27v.3h-1.100l-98.700-27.300-6-75.800h47.700L138 320l53.500 14.500 53.700-14.500 6-62.200H84.300L71.500 112.200h241.100l-4.400 47.700z"/></svg><span class="t" style="letter-spacing:0.033px">HTML5 &amp;</span><svg class="ic b mid" viewBox="0 0 384 512" style="width:30.00px;height:40.00px;" aria-hidden="true"><path d="M0 32l34.900 395.800L192 480l157.100-52.200L384 32H0zm313.100 80l-4.800 47.300L193 208.600l-.3.100h111.500l-12.800 146.600-98.200 28.700-98.800-29.200-6.400-73.900h48.900l3.200 38.300 52.600 13.300 54.700-15.400 3.700-61.600-166.300-.5v-.1l-.2.100-3.600-46.300L193.100 162l6.500-2.700H76.700L70.900 112h242.200z"/></svg><span class="t" style="letter-spacing:-0.873px"> CSS3</span></li>
<li class="b"><svg class="ic b" viewBox="0 0 448 512" style="width:35.00px;height:40.00px;" aria-hidden="true"><rect x="0" y="32" width="448" height="448"/><text x="265" y="436" text-anchor="middle" font-family="Liberation Sans, sans-serif" font-weight="700" font-size="284" textLength="300" lengthAdjust="spacingAndGlyphs" fill="#232323" stroke="none">JS</text></svg><span class="t" style="letter-spacing:-0.200px">JavaScript Designs</span></li></ul>
</article>
<article class="card">
<h4><svg class="ic h" viewBox="0 0 512 512" style="width:18.00px;height:18.00px;" aria-hidden="true"><path d="M78.600 5C69.100-2.400 55.600-1.500 47 7L7 47c-8.500 8.500-9.400 22-2.100 31.600l80 104c4.500 5.900 11.600 9.400 19 9.400h54.100l109 109c-14.700 29-10 65.400 14.300 89.600l112 112c12.500 12.500 32.800 12.500 45.300 0l64-64c12.500-12.500 12.500-32.800 0-45.300l-112-112c-24.200-24.200-60.600-29-89.600-14.300l-109-109V104c0-7.500-3.500-14.500-9.400-19L78.600 5zM19.900 396.100C7.200 408.800 0 426.100 0 444.100C0 481.600 30.400 512 67.900 512c18 0 35.300-7.200 48-19.900L233.700 374.300c-7.800-20.900-9-43.600-3.600-65.100l-61.700-61.700L19.900 396.100zM512 144c0-10.500-1.100-20.700-3.200-30.500c-2.400-11.200-16.100-14.100-24.200-6l-63.900 63.900c-3 3-7.100 4.700-11.300 4.700H352c-8.800 0-16-7.200-16-16V102.600c0-4.200 1.700-8.300 4.700-11.300l63.900-63.900c8.100-8.100 5.200-21.800-6-24.200C388.700 1.100 378.500 0 368 0C288.500 0 224 64.500 224 144l0 .8 85.300 85.300c36-9.100 75.800 .5 104 28.700L429 274.500c49-23 83-72.800 83-130.500zM56 432a24 24 0 1 1 48 0 24 24 0 1 1 -48 0z"/></svg><span class="t" style="letter-spacing:0.105px">Systems &amp; Development</span><span class="t l2" style="letter-spacing:0.045px"> Environments</span></h4>
<ul><li class="b"><svg class="ic b" viewBox="0 0 448 512" style="width:35.00px;height:40.00px;" aria-hidden="true"><path d="M0 93.700l183.600-25.300v177.400H0V93.700zm0 324.600l183.600 25.300V268.400H0v149.900zm203.800 28L448 480V268.400H203.800v177.900zm0-380.600v180.100H448V32L203.800 65.700z"/></svg><span class="t" style="letter-spacing:0.350px">Windows &amp;</span><svg class="ic b mid" viewBox="0 0 448 512" style="width:35.00px;height:40.00px;" aria-hidden="true"><g transform="translate(4.57,438.86) scale(0.28571,-0.28571)"><path d="M663 1125Q652 1124 647.5 1114.5Q643 1105 639 1105Q634 1104 634 1110Q634 1122 653 1125Q658 1125 663 1125ZM750 1111Q746 1110 738.5 1117.5Q731 1125 721 1122Q745 1133 753 1120Q756 1114 750 1111ZM399 684Q395 685 393.0 681.0Q391 677 388.5 668.5Q386 660 383 655Q380 650 373 642Q363 631 372 630Q376 629 384.5 637.0Q393 645 397 655Q398 658 399.0 662.0Q400 666 401.0 668.0Q402 670 402.5 672.5Q403 675 403.0 676.5Q403 678 403.0 679.5Q403 681 402.0 682.0Q401 683 399 684ZM1254 325Q1254 343 1199 367Q1203 382 1206.5 394.5Q1210 407 1211.5 420.5Q1213 434 1214.5 442.0Q1216 450 1215.0 464.5Q1214 479 1214.0 484.0Q1214 489 1210.5 506.0Q1207 523 1206.5 526.5Q1206 530 1201.5 551.5Q1197 573 1196 578Q1186 626 1149.0 681.0Q1112 736 1077 756Q1101 736 1134 673Q1221 511 1188 395Q1177 355 1138 353Q1107 349 1099.5 371.5Q1092 394 1091.5 455.0Q1091 516 1080 562Q1071 601 1060.5 631.0Q1050 661 1041.0 676.5Q1032 692 1025.5 701.0Q1019 710 1012.5 716.0Q1006 722 1005 723Q991 785 974.0 826.0Q957 867 944.5 882.0Q932 897 921.0 915.0Q910 933 906 955Q902 976 912.0 1008.5Q922 1041 916.5 1058.0Q911 1075 872 1083Q857 1086 827.5 1101.0Q798 1116 792 1117Q784 1118 781.0 1143.0Q778 1168 789.0 1194.0Q800 1220 825 1221Q862 1224 876.0 1191.0Q890 1158 880 1133Q869 1114 878.0 1106.5Q887 1099 908 1106Q921 1110 921.0 1142.0Q921 1174 921 1179Q916 1209 907.5 1229.0Q899 1249 886.5 1259.5Q874 1270 863.0 1274.5Q852 1279 836 1282Q729 1274 747 1148Q747 1133 746 1133Q737 1142 716.5 1143.5Q696 1145 683.5 1143.0Q671 1141 668 1148Q669 1205 652.0 1238.0Q635 1271 607 1272Q580 1273 565.5 1244.5Q551 1216 549 1185Q548 1170 552.5 1148.0Q557 1126 565.5 1110.5Q574 1095 581 1097Q591 1100 597 1111Q601 1120 590 1119Q583 1119 574.5 1133.5Q566 1148 565 1167Q564 1189 574.0 1204.0Q584 1219 608 1218Q625 1218 635.0 1197.0Q645 1176 644.5 1158.0Q644 1140 643 1136Q621 1121 612 1107Q604 1095 584.5 1083.5Q565 1072 564 1071Q551 1057 548.5 1044.0Q546 1031 556 1026Q570 1018 581.0 1006.5Q592 995 597.0 987.5Q602 980 615.5 974.5Q629 969 651 968Q698 966 753 983Q755 984 776.0 990.0Q797 996 810.5 1000.5Q824 1005 840.0 1013.5Q856 1022 861 1031Q870 1045 881 1039Q886 1036 887.5 1030.5Q889 1025 884.5 1018.5Q880 1012 868 1009Q848 1003 811.5 987.5Q775 972 766 968Q722 949 696 945Q671 940 617 947Q607 949 608 945Q609 941 625 926Q650 903 692 904Q709 905 728.0 911.0Q747 917 764.0 925.0Q781 933 797.5 942.5Q814 952 827.5 959.5Q841 967 852.0 971.5Q863 976 869.5 974.0Q876 972 878 963Q878 961 877.0 958.5Q876 956 873.0 953.5Q870 951 867.0 949.0Q864 947 858.5 944.0Q853 941 849.5 939.5Q846 938 839.5 934.5Q833 931 830 930Q802 916 762.5 886.0Q723 856 696.0 843.0Q669 830 647 842Q626 853 584 915Q562 946 559 937Q558 934 558 927Q558 902 543.0 870.5Q528 839 513.5 815.0Q499 791 492.5 757.0Q486 723 504 694Q481 688 441.5 604.0Q402 520 394 463Q392 445 392.5 394.0Q393 343 387 335Q379 311 358 332Q326 363 322 426Q320 454 326 482Q330 501 325 500Q323 499 321 495Q285 430 331 329Q336 317 356.0 301.0Q376 285 380 281Q400 258 484.0 190.5Q568 123 577 114Q593 99 594.5 76.0Q596 53 580.5 33.0Q565 13 535 10Q543 -5 564.0 -34.5Q585 -64 592.0 -88.5Q599 -113 599 -159Q645 -135 606 -67Q602 -59 595.5 -51.0Q589 -43 586.0 -39.0Q583 -35 584 -33Q587 -28 597.0 -23.5Q607 -19 617 -26Q663 -78 783 -62Q916 -47 960 25Q983 63 994 55Q1006 49 1004 3Q1003 -22 981 -89Q972 -112 975.0 -126.5Q978 -141 999 -142Q1002 -123 1013.5 -65.0Q1025 -7 1027 25Q1029 46 1020.5 98.5Q1012 151 1013.0 195.5Q1014 240 1036 266Q1051 284 1087 284Q1088 321 1121.5 337.0Q1155 353 1194.0 347.5Q1233 342 1254 325ZM626 1152Q629 1169 623.5 1182.0Q618 1195 612 1197Q603 1199 603 1190Q605 1185 608 1184Q618 1184 615 1169Q612 1149 623 1149Q626 1149 626 1152ZM1045 955Q1043 963 1038.5 966.5Q1034 970 1025.5 971.5Q1017 973 1011 977Q1006 980 1001.5 985.0Q997 990 994.5 993.0Q992 996 989.0 999.5Q986 1003 985.0 1003.5Q984 1004 981 1002Q967 986 988.0 958.5Q1009 931 1027 927Q1036 926 1041.5 935.0Q1047 944 1045 955ZM867 1168Q867 1179 862.0 1187.5Q857 1196 851.0 1200.0Q845 1204 842 1203Q836 1203 834.0 1201.0Q832 1199 834.0 1197.0Q836 1195 839 1194Q853 1190 857 1163Q857 1160 865 1165Q867 1167 867 1168ZM921 1401Q921 1403 918.5 1406.0Q916 1409 909.5 1413.0Q903 1417 900 1419Q885 1434 876 1434Q867 1433 864.5 1426.5Q862 1420 863.5 1413.5Q865 1407 863 1401Q862 1397 857.0 1390.5Q852 1384 851.0 1381.5Q850 1379 854 1373Q858 1370 862.0 1373.0Q866 1376 873.0 1382.0Q880 1388 888 1391Q889 1392 897.0 1392.0Q905 1392 912.0 1394.0Q919 1396 921 1401ZM1486 60Q1506 48 1517.0 35.5Q1528 23 1529.0 11.5Q1530 0 1526.5 -11.0Q1523 -22 1511.0 -33.0Q1499 -44 1487.5 -52.5Q1476 -61 1457.5 -71.0Q1439 -81 1426.0 -87.5Q1413 -94 1394.0 -103.0Q1375 -112 1367 -116Q1329 -135 1281.5 -172.0Q1234 -209 1206 -236Q1189 -252 1138.0 -255.5Q1087 -259 1049 -241Q1031 -232 1019.5 -217.5Q1008 -203 1003.0 -192.0Q998 -181 981.0 -172.5Q964 -164 934 -163Q890 -162 804 -162Q785 -162 747.0 -163.5Q709 -165 689 -166Q645 -167 609.5 -181.0Q574 -195 556.0 -211.0Q538 -227 512.5 -239.5Q487 -252 459 -251Q430 -250 348.0 -220.0Q266 -190 202 -177Q183 -173 151.0 -167.5Q119 -162 101.0 -158.5Q83 -155 61.5 -149.0Q40 -143 28.0 -134.5Q16 -126 11 -115Q1 -92 18.0 -48.5Q35 -5 36 6Q37 22 32.0 46.0Q27 70 22.0 88.5Q17 107 17.5 125.0Q18 143 28 152Q42 164 85.0 166.0Q128 168 145 178Q175 196 187.0 213.0Q199 230 199 264Q220 191 167 158Q135 138 84 143Q50 146 41 133Q28 118 46 76Q48 70 54.0 58.0Q60 46 62.5 40.0Q65 34 67.0 23.0Q69 12 68 1Q68 -14 51.0 -48.0Q34 -82 37 -96Q40 -113 74 -122Q94 -128 158.5 -140.5Q223 -153 258 -161Q282 -167 332.0 -183.0Q382 -199 414.5 -206.0Q447 -213 470 -210Q513 -204 534.5 -182.0Q556 -160 557.5 -134.0Q559 -108 550.0 -75.5Q541 -43 531.0 -23.5Q521 -4 511 13Q390 203 342 255Q274 329 229 295Q218 286 214 310Q211 326 212 348Q213 377 222.0 400.0Q231 423 246.0 447.0Q261 471 268 489Q276 510 294.5 561.0Q313 612 324.0 639.0Q335 666 354.0 700.0Q373 734 393 754Q503 897 517 949Q505 1061 501 1259Q499 1349 525.0 1410.5Q551 1472 631 1515Q670 1536 735 1536Q788 1537 841.0 1522.5Q894 1508 930 1481Q987 1439 1021.5 1359.5Q1056 1280 1051 1212Q1046 1117 1081 998Q1115 885 1214 780Q1269 721 1313.5 617.0Q1358 513 1373 426Q1381 377 1378.0 341.5Q1375 306 1366.0 286.0Q1357 266 1346 264Q1336 262 1322.5 245.0Q1309 228 1295.5 209.5Q1282 191 1255.0 176.0Q1228 161 1194 162Q1176 163 1162.5 167.0Q1149 171 1140.0 180.5Q1131 190 1126.5 196.0Q1122 202 1115.0 216.5Q1108 231 1106 236Q1084 273 1065.0 266.0Q1046 259 1037.0 217.0Q1028 175 1044 120Q1064 50 1045 -75Q1035 -140 1063.0 -175.5Q1091 -211 1136.0 -208.5Q1181 -206 1221 -173Q1280 -124 1310.5 -106.5Q1341 -89 1414 -64Q1467 -46 1491.0 -27.5Q1515 -9 1509.5 7.0Q1504 23 1484.5 35.5Q1465 48 1433 59Q1400 70 1383.5 107.0Q1367 144 1368.5 179.5Q1370 215 1384 227Q1385 196 1392.0 170.5Q1399 145 1406.5 130.0Q1414 115 1427.0 101.5Q1440 88 1448.0 82.5Q1456 77 1469.5 69.5Q1483 62 1486 60Z"/></g></svg><span class="t" style="letter-spacing:-0.086px"> Linux OS</span></li>
<li class="s"><svg class="ic s" viewBox="0 0 576 512" style="width:16.20px;height:14.40px;" aria-hidden="true"><path d="M9.400 86.600C-3.100 74.100-3.100 53.900 9.400 41.400s32.800-12.500 45.300 0l192 192c12.500 12.500 12.500 32.800 0 45.300l-192 192c-12.500 12.500-32.800 12.500-45.300 0s-12.500-32.800 0-45.300L178.700 256 9.400 86.600zM256 416H544c17.700 0 32 14.300 32 32s-14.300 32-32 32H256c-17.700 0-32-14.300-32-32s14.300-32 32-32z"/></svg><span class="t" style="letter-spacing:-0.159px">IntelliJ &amp; Eclipse IDEs</span></li>
<li class="s"><svg class="ic s" viewBox="0 0 576 512" style="width:16.20px;height:14.40px;" aria-hidden="true"><path d="M9.400 86.600C-3.100 74.100-3.100 53.900 9.400 41.400s32.800-12.500 45.300 0l192 192c12.500 12.500 12.500 32.800 0 45.300l-192 192c-12.500 12.500-32.800 12.500-45.300 0s-12.500-32.800 0-45.300L178.700 256 9.400 86.600zM256 416H544c17.700 0 32 14.300 32 32s-14.300 32-32 32H256c-17.700 0-32-14.300-32-32s14.300-32 32-32z"/></svg><span class="t" style="letter-spacing:0.100px">Visual Studio</span></li>
<li class="s"><svg class="ic s" viewBox="0 0 576 512" style="width:16.20px;height:14.40px;" aria-hidden="true"><path d="M9.400 86.600C-3.100 74.100-3.100 53.900 9.400 41.400s32.800-12.500 45.300 0l192 192c12.500 12.500 12.500 32.800 0 45.300l-192 192c-12.500 12.500-32.800 12.500-45.300 0s-12.500-32.800 0-45.300L178.700 256 9.400 86.600zM256 416H544c17.700 0 32 14.300 32 32s-14.300 32-32 32H256c-17.700 0-32-14.300-32-32s14.300-32 32-32z"/></svg><span class="t" style="letter-spacing:-0.047px">Visual Studio Code</span></li>
<li class="s"><svg class="ic s" viewBox="0 0 576 512" style="width:16.20px;height:14.40px;" aria-hidden="true"><path d="M9.400 86.600C-3.100 74.100-3.100 53.900 9.400 41.400s32.800-12.500 45.300 0l192 192c12.500 12.500 12.500 32.800 0 45.300l-192 192c-12.500 12.500-32.800 12.500-45.300 0s-12.500-32.800 0-45.300L178.700 256 9.400 86.600zM256 416H544c17.700 0 32 14.300 32 32s-14.300 32-32 32H256c-17.700 0-32-14.300-32-32s14.300-32 32-32z"/></svg><span class="t" style="letter-spacing:0.017px">Golang Studio</span></li>
<li class="s"><svg class="ic s" viewBox="0 0 512 512" style="width:14.40px;height:14.40px;" aria-hidden="true"><path d="M152.100 38.200c9.900 8.900 10.700 24 1.800 33.900l-72 80c-4.400 4.900-10.600 7.800-17.200 7.900s-12.900-2.400-17.600-7L7 113C-2.300 103.600-2.300 88.400 7 79s24.600-9.400 33.900 0l22.100 22.100 55.100-61.200c8.900-9.900 24-10.700 33.900-1.800zm0 160c9.900 8.900 10.700 24 1.800 33.900l-72 80c-4.400 4.900-10.600 7.800-17.200 7.900s-12.900-2.400-17.600-7L7 273c-9.400-9.400-9.400-24.600 0-33.900s24.600-9.400 33.900 0l22.100 22.100 55.100-61.200c8.900-9.900 24-10.700 33.900-1.800zM224 96c0-17.700 14.300-32 32-32H480c17.700 0 32 14.300 32 32s-14.300 32-32 32H256c-17.700 0-32-14.300-32-32zm0 160c0-17.700 14.300-32 32-32H480c17.700 0 32 14.300 32 32s-14.300 32-32 32H256c-17.700 0-32-14.300-32-32zM160 416c0-17.700 14.300-32 32-32H480c17.700 0 32 14.300 32 32s-14.300 32-32 32H192c-17.700 0-32-14.300-32-32zM48 368a48 48 0 1 1 0 96 48 48 0 1 1 0-96z"/></svg><span class="t" style="letter-spacing:-0.053px">IDE's Specific To Projects Also</span></li></ul>
</article>
</div>
<h3 class="soft"><span class="t">Soft</span> <span class="o"><span class="t" style="letter-spacing:0.520px">Skills</span></span></h3>
<div class="grid g2">
<article class="card">
<h4><svg class="ic h" viewBox="0 0 640 512" style="width:22.50px;height:18.00px;" aria-hidden="true"><path d="M323.400 85.200l-96.800 78.400c-16.100 13-19.200 36.400-7 53.100c12.900 17.800 38 21.300 55.300 7.800l99.300-77.200c7-5.400 17-4.200 22.500 2.800s4.200 17-2.800 22.500l-20.900 16.200L512 316.800V128h-.7l-3.900-2.500L434.800 79c-15.300-9.800-33.200-15-51.400-15c-21.800 0-43 7.500-60 21.200zm22.800 124.400l-51.700 40.200C263 274.400 217.300 268 193.700 235.600c-22.200-30.500-16.600-73.100 12.700-96.800l83.200-67.300c-11.600-4.900-24.100-7.400-36.800-7.400C234 64 215.700 69.600 200 80l-72 48V352h28.200l91.400 83.400c19.600 17.900 49.900 16.500 67.800-3.100c5.500-6.100 9.200-13.200 11.100-20.600l17 15.600c19.500 17.900 49.900 16.600 67.800-2.900c4.500-4.900 7.800-10.600 9.900-16.500c19.400 13 45.800 10.300 62.100-7.500c17.900-19.500 16.600-49.900-2.900-67.800l-134.200-123zM16 128c-8.800 0-16 7.200-16 16V352c0 17.700 14.300 32 32 32H64c17.700 0 32-14.300 32-32V128H16zM48 320a16 16 0 1 1 0 32 16 16 0 1 1 0-32zM544 128V352c0 17.700 14.300 32 32 32h32c17.700 0 32-14.300 32-32V144c0-8.800-7.200-16-16-16H544zm32 208a16 16 0 1 1 32 0 16 16 0 1 1 -32 0z"/></svg><span class="t" style="letter-spacing:0.070px">Professionalism</span></h4>
<ul></ul>
</article>
<article class="card">
<h4><svg class="ic h" viewBox="0 0 640 512" style="width:22.50px;height:18.00px;" aria-hidden="true"><path d="M144 0a80 80 0 1 1 0 160A80 80 0 1 1 144 0zM512 0a80 80 0 1 1 0 160A80 80 0 1 1 512 0zM0 298.700C0 239.800 47.800 192 106.700 192h42.700c15.900 0 31 3.500 44.600 9.700c-1.300 7.200-1.900 14.700-1.900 22.300c0 38.200 16.800 72.500 43.300 96c-.2 0-.4 0-.7 0H21.300C9.600 320 0 310.400 0 298.700zM405.300 320c-.2 0-.4 0-.7 0c26.600-23.500 43.300-57.800 43.300-96c0-7.600-.7-15-1.900-22.300c13.600-6.300 28.700-9.700 44.600-9.700h42.700C592.200 192 640 239.800 640 298.700c0 11.800-9.600 21.300-21.300 21.300H405.300zM224 224a96 96 0 1 1 192 0 96 96 0 1 1 -192 0zM128 485.300C128 411.700 187.700 352 261.300 352H378.700C452.300 352 512 411.700 512 485.300c0 14.700-11.900 26.700-26.700 26.700H154.700c-14.700 0-26.700-11.900-26.700-26.700z"/></svg><span class="t" style="letter-spacing:0.150px">Collaboration &amp; Communication</span></h4>
<ul></ul>
</article>
<article class="card">
<h4><svg class="ic h" viewBox="0 0 512 512" style="width:18.00px;height:18.00px;" aria-hidden="true"><path d="M184 0c30.900 0 56 25.100 56 56V456c0 30.900-25.100 56-56 56c-28.900 0-52.700-21.900-55.700-50.100c-5.200 1.400-10.700 2.100-16.300 2.100c-35.300 0-64-28.700-64-64c0-7.400 1.300-14.600 3.600-21.200C21.400 367.400 0 338.200 0 304c0-31.900 18.700-59.500 45.800-72.300C37.100 220.800 32 207 32 192c0-30.700 21.600-56.300 50.400-62.600C80.800 123.900 80 118 80 112c0-29.900 20.600-55.100 48.300-62.100C131.300 21.900 155.100 0 184 0zM328 0c28.900 0 52.600 21.900 55.700 49.900c27.800 7 48.300 32.100 48.300 62.100c0 6-.8 11.900-2.400 17.400c28.800 6.200 50.400 31.900 50.400 62.600c0 15-5.100 28.800-13.800 39.700C493.300 244.500 512 272.100 512 304c0 34.200-21.400 63.400-51.600 74.800c2.300 6.600 3.600 13.800 3.600 21.200c0 35.300-28.700 64-64 64c-5.600 0-11.100-.7-16.300-2.100c-3 28.200-26.800 50.100-55.700 50.100c-30.900 0-56-25.100-56-56V56c0-30.900 25.100-56 56-56z"/></svg><span class="t" style="letter-spacing:0.309px">Adaptability &amp; Learning</span></h4>
<ul></ul>
</article>
</div>
</section>
</main>
<div class="sbar"><div class="thumb"></div></div>
</body>
</html>
